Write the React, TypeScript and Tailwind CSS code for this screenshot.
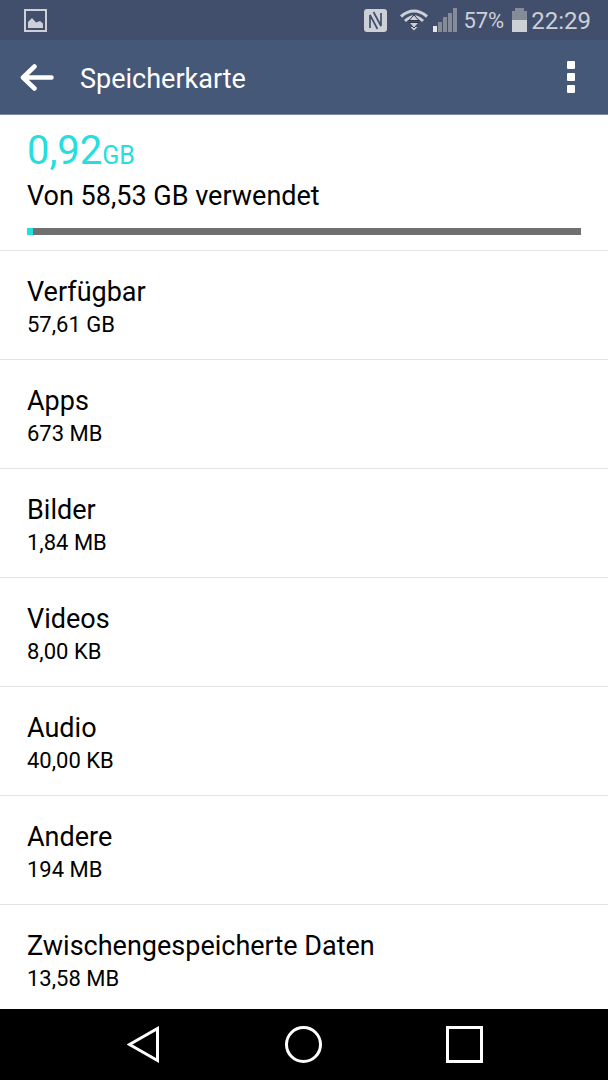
const categories = [
    { name: "Verfügbar", size: "57,61 GB" },
    { name: "Apps", size: "673 MB" },
    { name: "Bilder", size: "1,84 MB" },
    { name: "Videos", size: "8,00 KB" },
    { name: "Audio", size: "40,00 KB" },
    { name: "Andere", size: "194 MB" },
    { name: "Zwischengespeicherte Daten", size: "13,58 MB" },
]

const usedPercent = 1

const StatusBar = () => {
    return (
        <div className="h-10 shrink-0 pl-6 pr-[17px] flex items-center justify-between bg-[#414f6d] text-[#cdd0d6]">
            <svg width="23" height="23" viewBox="0 0 23 23" fill="none">
                <rect x="1" y="1" width="21" height="21" stroke="currentColor" strokeWidth="2" />
                <path d="M4 19V13L8 9L12 13.5L16 12L19 14.5V19Z" fill="currentColor" />
            </svg>
            <div className="flex items-center">
                <svg width="23" height="23" viewBox="0 0 23 23" className="mr-[13px]">
                    <rect width="23" height="23" rx="3" fill="currentColor" />
                    <path d="M6 19V6L13.500 20" fill="none" stroke="#414f6d" strokeWidth="1.700" />
                    <path d="M17 4V17L9.500 3" fill="none" stroke="#414f6d" strokeWidth="1.700" />
                </svg>
                <svg width="28" height="22" viewBox="0 0 28 22" fill="none" stroke="currentColor" strokeWidth="3" className="mr-1">
                    <path d="M1 7.500Q14 -3.500 27 7.500" />
                    <path d="M5 12Q14 3.500 23 12" />
                    <path d="M10.500 18L14 21.500L17.500 18Z" fill="currentColor" stroke="none" />
                    <path d="M9 11.500L14 6L19 11.500Z" fill="currentColor" stroke="#2f384d" strokeWidth="1" />
                    <path d="M9 13.500L14 19L19 13.500Z" fill="currentColor" stroke="#2f384d" strokeWidth="1" />
                </svg>
                <svg width="25" height="24" viewBox="0 0 25 24" className="mr-1.5">
                    <rect x="1" y="18" width="4" height="6" fill="#e6e7e9" />
                    <rect x="6" y="14" width="4" height="10" fill="#868b98" />
                    <rect x="11" y="9" width="4" height="15" fill="#868b98" />
                    <rect x="16" y="5" width="4" height="19" fill="#868b98" />
                    <rect x="21" y="0" width="4" height="24" fill="#868b98" />
                </svg>
                <span className="pt-0.5 text-[22px] leading-6">57%</span>
                <svg width="15" height="24" viewBox="0 0 15 24" className="ml-2 mr-1">
                    <path d="M3 0H12V3H15V12H0V3H3Z" fill="#868b98" />
                    <rect y="12" width="15" height="12" fill="currentColor" />
                </svg>
                <span className="pt-0.5 text-[24px] leading-6">22:29</span>
            </div>
        </div>
    )
}

const Header = () => {
    return (
        <header className="h-[75px] shrink-0 pl-5 pr-[33px] flex items-center bg-[#465878] border-b border-b-[#7c89a0] text-white">
            <button type="button" aria-label="Zurück" className="cursor-pointer">
                <svg width="34" height="28" viewBox="0 0 34 28" fill="none" stroke="currentColor" strokeWidth="4.500" strokeLinecap="round" strokeLinejoin="round">
                    <path d="M14.500 3.500L3 14.500L14.500 25.500M3 14.500H31.500" />
                </svg>
            </button>
            <h1 className="flex-1 ml-[26px] pt-1 text-[27px] leading-8">Speicherkarte</h1>
            <button type="button" aria-label="Menü" className="cursor-pointer">
                <svg width="8" height="32" viewBox="0 0 8 32" fill="currentColor">
                    <rect width="8" height="8" rx="1" />
                    <rect y="12" width="8" height="8" rx="1" />
                    <rect y="24" width="8" height="8" rx="1" />
                </svg>
            </button>
        </header>
    )
}

const NavBar = () => {
    return (
        <nav className="h-[71px] shrink-0 px-16 flex items-center bg-black text-white">
            <button type="button" aria-label="Zurück" className="flex-1 flex justify-center cursor-pointer">
                <svg width="34" height="38" viewBox="0 0 34 38" fill="none" stroke="currentColor" strokeWidth="3">
                    <path d="M30.500 2.500V34.500L2.500 18.500Z" />
                </svg>
            </button>
            <button type="button" aria-label="Startseite" className="flex-1 flex justify-center cursor-pointer">
                <svg width="38" height="38" viewBox="0 0 38 38" fill="none" stroke="currentColor" strokeWidth="3">
                    <circle cx="18.500" cy="18.500" r="17" />
                </svg>
            </button>
            <button type="button" aria-label="Übersicht" className="flex-1 flex justify-center cursor-pointer">
                <svg width="38" height="38" viewBox="0 0 38 38" fill="none" stroke="currentColor" strokeWidth="3">
                    <rect x="2.500" y="1.500" width="34" height="34" />
                </svg>
            </button>
        </nav>
    )
}

const App = () => {
    return (
        <div className="w-full h-screen flex flex-col bg-white text-black font-[Roboto,sans-serif]">
            <StatusBar />
            <Header />
            <main className="flex-1 min-h-0 overflow-y-auto [scrollbar-width:none]">
                <section className="px-[27px] pt-3 pb-[15px] border-b border-b-[#e4e4e4]">
                    <p className="text-[40px] leading-[48px] text-[#25dede]">
                        0,92<span className="text-[25px]">GB</span>
                    </p>
                    <p className="text-[27px] leading-8">Von 58,53 GB verwendet</p>
                    <div className="mt-4 h-[7px] bg-[#707070]">
                        <div className="h-full bg-[#25dede]" style={{ width: `${usedPercent}%` }}></div>
                    </div>
                </section>
                <ul>
                    {categories.map((item) => (
                        <li key={item.name} className="px-[27px] pt-[25px] pb-[21px] flex flex-col gap-1 border-b border-b-[#e4e4e4]">
                            <p className="text-[27px] leading-8">{item.name}</p>
                            <p className="text-[22px] leading-[26px]">{item.size}</p>
                        </li>
                    ))}
                </ul>
            </main>
            <NavBar />
        </div>
    )
}

export default App
